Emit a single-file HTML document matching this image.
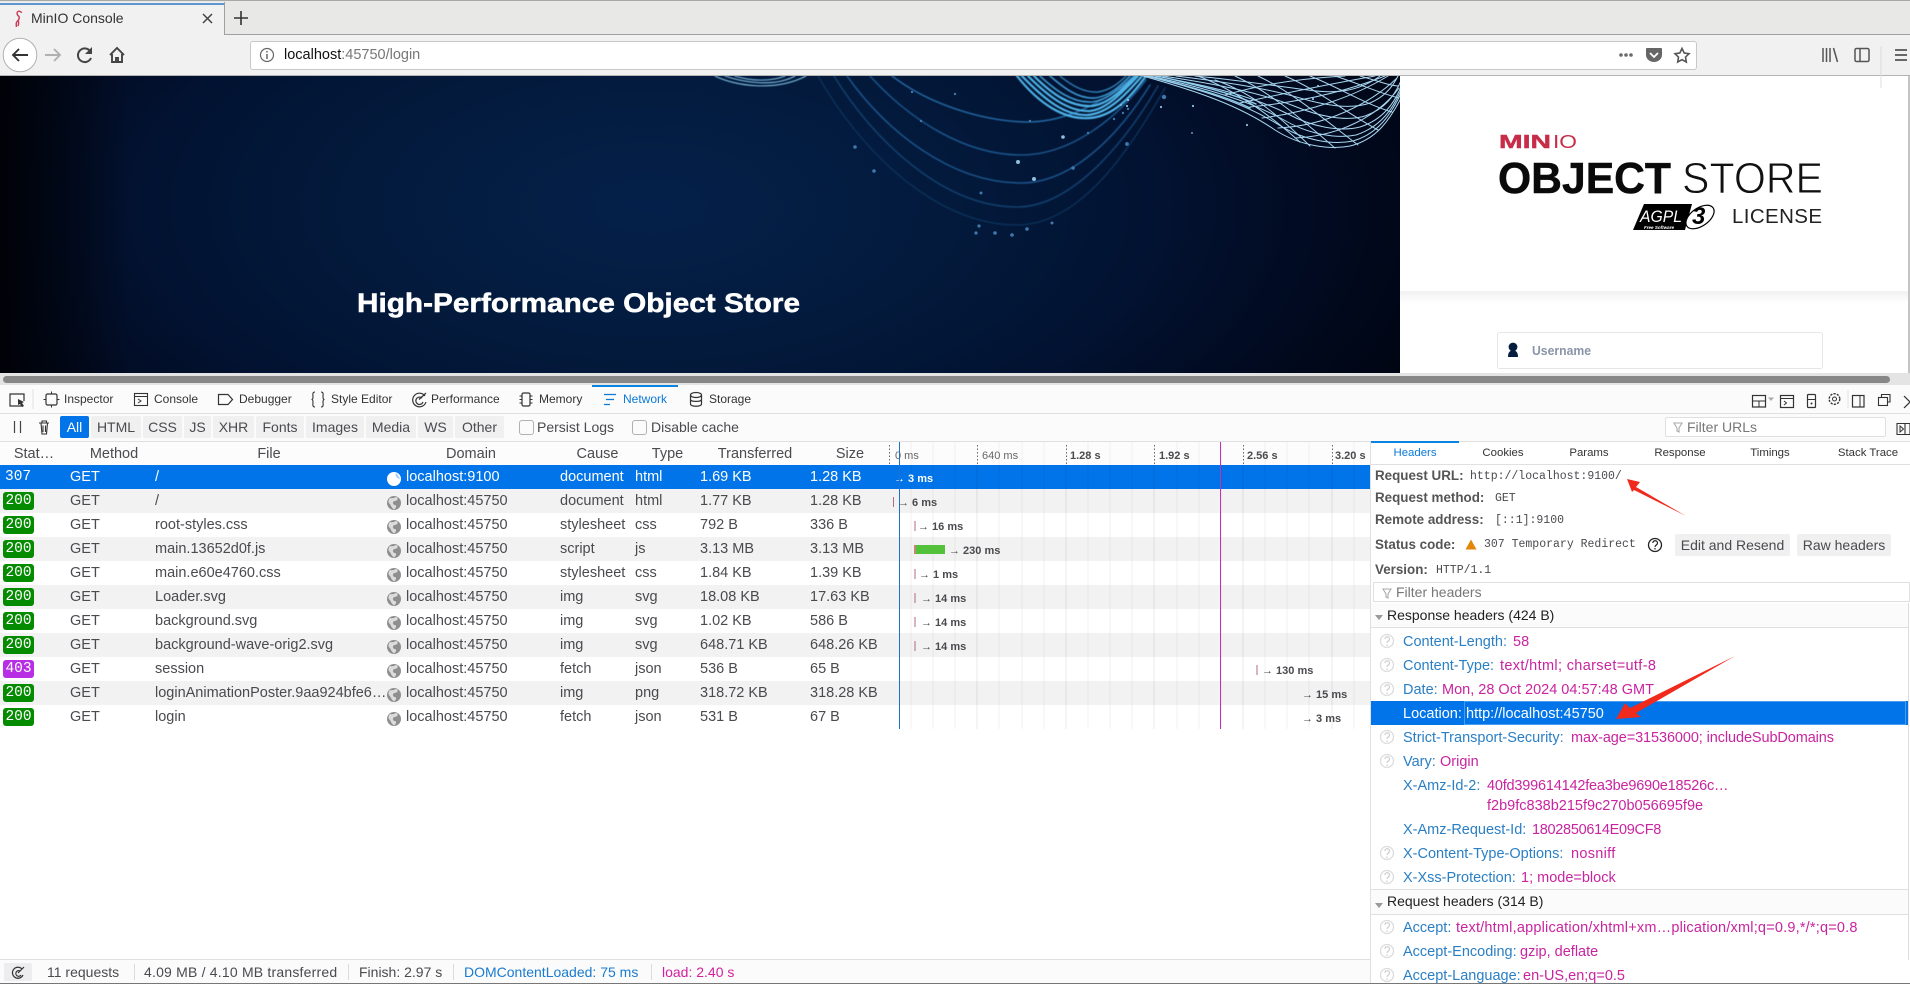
<!DOCTYPE html>
<html lang="en"><head><meta charset="utf-8"><title>MinIO Console</title>
<style>
html,body{margin:0;padding:0;width:1910px;height:984px;overflow:hidden;background:#fff}
body{position:relative;font-family:"Liberation Sans",sans-serif;color:#4a4a4f;font-size:14.5px}
.a,.t{position:absolute}
.t{white-space:nowrap;line-height:20px;height:20px}
.m{font-family:"Liberation Mono",monospace;font-size:11.5px;color:#4a4a4f;margin-top:1px}
.b{font-weight:bold;font-size:13.4px;color:#555}
.tb{font-size:12px;color:#333}
.fb{position:absolute;top:416px;height:22px;line-height:22px;background:#f0f0f1;border-radius:2px;text-align:center;font-size:14px;color:#4a4a4f}
.h{position:absolute;top:442px;height:24px;line-height:24px;text-align:center;font-size:14.5px;color:#4a4a4f}
.r{position:absolute;left:0;width:1370px;height:24px;font-size:14.5px;color:#4a4a4f}
.r span{position:absolute;top:0;line-height:24px;white-space:nowrap}
.o{background:#f2f2f2}
.c1{left:70px}.c2{left:155px}.c3{left:406px}.c4{left:560px}.c5{left:635px}.c6{left:700px}.c7{left:810px}
.r .s{left:3px;top:3px;width:31px;height:18px;line-height:18px;border-radius:3px;background:#058b00;color:#fff;font-family:"Liberation Mono",monospace;font-size:14.5px;text-align:center}
.tk{position:absolute;font-size:11px;font-weight:bold;color:#4a4a4f;white-space:nowrap;line-height:16px;margin-top:1px}
.st{font-size:11.4px;color:#333;text-align:center;position:absolute;top:441px;height:23px;line-height:25px}
.n{color:#2a7fc4;font-size:14.5px;position:absolute;left:1403px;white-space:nowrap;line-height:20px;margin-top:1px}
.v{color:#c9249f;font-size:14.5px;position:absolute;white-space:nowrap;line-height:20px;margin-top:1px}
.sb{position:absolute;top:962px;line-height:20px;font-size:14px;white-space:nowrap;color:#4a4a4f}
.sp{position:absolute;top:964px;width:1px;height:16px;background:#dcdcdc}
</style></head><body>

<!-- browser chrome -->
<div class="a" style="left:0;top:0;width:1910px;height:34px;background:#e8e8e7;border-top:1px solid #a8a8a8;box-sizing:border-box"></div>
<div class="a" style="left:0;top:34px;width:1910px;height:1px;background:#a0a0a0"></div>
<div class="a" style="left:0;top:35px;width:1910px;height:41px;background:#f1f1f1"></div>
<div class="a" style="left:0;top:2px;width:224px;height:33px;background:#f1f1f1;border-right:1px solid #a0a0a0;box-sizing:content-box"></div>
<div class="a" style="left:0;top:3px;width:224px;height:2px;background:#5f96cd"></div>
<div class="t" style="left:31px;top:8px;font-size:14px;color:#333">MinIO Console</div>
<div class="a" style="left:250px;top:41px;width:1447px;height:29px;box-sizing:border-box;background:#fff;border:1px solid #c8c8c8;border-radius:3px"></div>
<div class="t" style="left:284px;top:45px;font-size:14.5px;color:#111">localhost<span style="color:#777">:45750/login</span></div>

<!-- page -->
<div class="a" style="left:0;top:75px;width:1910px;height:1px;background:#b4b4b4"></div>
<div class="a" style="left:0;top:76px;width:1400px;height:297px;background:linear-gradient(90deg,#000208,rgba(0,2,8,0) 130px),radial-gradient(ellipse 850px 420px at 650px 130px,#04204a 0%,#031a3c 35%,#021231 60%,#010a20 80%,#000410 100%)"></div>
<svg class="a" style="left:0;top:76px" width="1400" height="297" viewBox="0 76 1400 297">
<g fill="none" stroke-linecap="round" style="filter:blur(.45px)">
<g stroke="#1a5288" stroke-width="1.6">
<path d="M892 76C930 105 985 122 1030 122C1070 121 1105 100 1135 78" stroke="#23639c"/>
<path d="M870 76C910 120 965 155 1021 155C1070 155 1115 120 1146 80" />
<path d="M847 76C885 130 950 183 1021 183C1075 183 1122 130 1150 85" />
<path d="M834 76C870 135 940 207 1017 207C1075 207 1130 135 1158 86" stroke="#123f6d"/>
<path d="M818 76C860 150 935 225 1017 225C1080 225 1130 150 1165 88" stroke="#0c2f56" />
</g>
<g stroke="#4fb4e8" stroke-width="2.2">
<path d="M1017 76C1040 105 1065 120 1090 118C1115 116 1132 95 1146 76"/>
<path d="M1022 76C1045 100 1065 116 1088 115C1110 113 1128 92 1142 76"/>
<path d="M1028 76C1048 96 1068 112 1090 111C1108 109 1124 90 1138 76"/>
<path d="M1034 76C1052 94 1070 107 1092 106C1108 104 1122 90 1136 76"/>
<path d="M1040 76C1055 90 1072 103 1092 102C1108 100 1120 88 1134 76" stroke="#3c96cc" stroke-width="1.6"/>
<path d="M1050 76C1064 88 1078 99 1095 98C1110 96 1120 86 1130 76" stroke="#3c96cc" stroke-width="1.6"/>
<path d="M1060 76C1072 86 1085 93 1098 92C1110 90 1118 84 1126 76" stroke="#2f80b8" stroke-width="1.4"/>
</g>
<g stroke="#7fc0e4" stroke-width="1.1">
<path d="M715 76C735 86 775 92 806 76"/><path d="M725 76C745 83 775 87 795 76"/><path d="M735 76C750 81 770 82 785 76"/>
</g></g>
<g fill="none" stroke="#a8d6f0" stroke-width="1" stroke-linecap="round" style="filter:blur(.2px)">
<path d="M1143 76C1200 92 1240 106 1275 130C1300 146 1330 150 1350 146C1375 140 1390 122 1405 90"/>
<path d="M1146 76C1203 90 1244 103 1279 125C1305 141 1333 145 1353 141C1377 134 1392 116 1405 84"/>
<path d="M1150 76C1205 88 1248 100 1284 120C1308 134 1336 139 1356 135C1380 127 1394 110 1405 80"/>
<path d="M1155 76C1210 86 1252 96 1288 114C1312 127 1340 132 1360 127C1382 120 1396 104 1405 76"/>
<path d="M1163 76C1215 84 1258 92 1294 106C1318 116 1345 122 1365 116C1385 109 1395 96 1403 76"/>
<path d="M1176 76C1225 82 1265 88 1300 98C1324 105 1350 110 1370 103C1384 97 1392 88 1398 76"/>
<path d="M1195 76C1238 80 1275 86 1308 90C1335 94 1358 92 1380 76"/>
<path d="M1148 76C1195 88 1225 96 1250 108" stroke="#8fcdee" stroke-width="1.4"/>
<path d="M1158 76C1200 86 1228 92 1256 104" stroke="#8fcdee" stroke-width="1.4"/>
<path d="M1215 80C1250 92 1275 112 1310 146"/><path d="M1198 76C1235 90 1270 115 1300 142"/>
<path d="M1235 76C1270 92 1300 118 1335 148"/><path d="M1258 76C1292 92 1325 120 1358 145"/>
<path d="M1285 76C1318 90 1345 112 1378 130"/><path d="M1310 76C1340 88 1365 104 1392 112"/>
<path d="M1335 76C1360 84 1382 94 1399 98"/><path d="M1360 76C1375 80 1390 86 1399 86"/>
<path d="M1225 95C1270 82 1310 78 1345 76"/><path d="M1240 103C1290 92 1330 84 1375 76"/>
<path d="M1262 118C1310 112 1355 96 1388 76"/><path d="M1278 128C1325 126 1370 104 1397 78"/>
<path d="M1295 138C1340 136 1378 116 1399 88"/><path d="M1250 107C1300 102 1345 92 1385 76"/>
</g>
<g fill="#3f78ad">
<circle cx="855" cy="147" r="1.8"/><circle cx="874" cy="171" r="1.8"/><circle cx="912" cy="92" r="1.2"/><circle cx="921" cy="121" r="1.2"/><circle cx="955" cy="94" r="1.2"/><circle cx="981" cy="193" r="1.5"/><circle cx="979" cy="226" r="1.6"/><circle cx="976" cy="233" r="1.6"/><circle cx="995" cy="233" r="1.8"/><circle cx="1012" cy="235" r="1.8"/><circle cx="1027" cy="229" r="1.8"/><circle cx="1052" cy="223" r="1.5"/>
<circle cx="1073" cy="168" r="1.8"/><circle cx="1030" cy="121" r="1.2"/><circle cx="1088" cy="133" r="1.2"/><circle cx="1127" cy="144" r="1.9"/><circle cx="1114" cy="119" r="1.2"/><circle cx="1123" cy="113" r="1.2"/><circle cx="1128" cy="109" r="1.2"/><circle cx="1164" cy="97" r="2.2"/></g>
<g fill="#8fbfe0"><circle cx="1018" cy="162" r="2"/><circle cx="1034" cy="179" r="2"/><circle cx="1063" cy="137" r="1.8"/><circle cx="1127" cy="106" r="1.1"/><circle cx="1121" cy="105" r=".9"/><circle cx="1128" cy="100" r="1.1"/><circle cx="1161" cy="107" r="1.1"/><circle cx="1193" cy="106" r="1.1"/><circle cx="1192" cy="133" r=".9"/><circle cx="1247" cy="125" r="1.1"/><circle cx="1312" cy="90" r="1.1"/><circle cx="1318" cy="86" r="1.1"/><circle cx="1313" cy="99" r="1.1"/></g>
<text x="357" y="312" font-family="Liberation Sans,sans-serif" font-weight="bold" font-size="27" fill="#fff" stroke="#fff" stroke-width=".5" textLength="443" lengthAdjust="spacingAndGlyphs">High-Performance Object Store</text>
</svg>

<div class="a" style="left:1400px;top:76px;width:508px;height:297px;background:#fff"></div>
<div class="a" style="left:1908px;top:76px;width:2px;height:297px;background:#c4c4c4"></div>
<div class="a" style="left:1400px;top:291px;width:508px;height:12px;background:linear-gradient(#f0f0f0,#fff)"></div>
<svg class="a" style="left:1400px;top:76px" width="508" height="297" viewBox="1400 76 508 297" font-family="Liberation Sans,sans-serif">
<text x="1499" y="148" font-size="18" font-weight="bold" fill="#c72c48" textLength="52" lengthAdjust="spacingAndGlyphs" stroke="#c72c48" stroke-width=".4">MIN</text>
<text x="1553" y="148" font-size="18" fill="#c72c48" textLength="24" lengthAdjust="spacingAndGlyphs">IO</text>
<text x="1498" y="193" font-size="44" font-weight="bold" fill="#0a0a0a" stroke="#0a0a0a" stroke-width=".5" textLength="173" lengthAdjust="spacingAndGlyphs">OBJECT</text>
<text x="1682" y="193" font-size="44" fill="#111" stroke="#fff" stroke-width=".9" textLength="141" lengthAdjust="spacingAndGlyphs">STORE</text>
<text x="1732" y="223" font-size="20.5" fill="#222" textLength="90" lengthAdjust="spacing">LICENSE</text>
<polygon points="1633,230 1644,204 1692,204 1687,222 1685,230" fill="#000"/>
<text x="1640" y="222" font-size="17" font-style="italic" fill="#fff" textLength="42" lengthAdjust="spacingAndGlyphs">AGPL</text>
<text x="1644" y="229" font-size="4.5" font-style="italic" font-weight="bold" fill="#fff" textLength="30" lengthAdjust="spacingAndGlyphs">Free Software</text>
<path d="M1684 216C1692 222 1696 214 1700 208" fill="none" stroke="#000" stroke-width="1.4"/>
<ellipse cx="1700" cy="217" rx="16" ry="9" transform="rotate(-35 1700 217)" fill="#fff" stroke="#000" stroke-width="1.2"/>
<text x="1692" y="224" font-size="24" font-style="italic" font-weight="bold" fill="#000">3</text>
<rect x="1497.5" y="332.5" width="325" height="36" rx="2" fill="#fff" stroke="#e4e6ea"/>
<circle cx="1513" cy="347" r="4.4" fill="#071d3f"/><path d="M1508 357c0-5 2-6.500 5-6.500s5 1.500 5 6.500z" fill="#071d3f"/>
<text x="1532" y="355" font-size="13" font-weight="bold" fill="#8a94a8" textLength="59" lengthAdjust="spacingAndGlyphs">Username</text>
</svg>
<div class="a" style="left:0;top:373px;width:1910px;height:12px;background:#e4e4e4"></div>
<div class="a" style="left:3px;top:376px;width:1887px;height:7px;background:#878787;border-radius:4px"></div>

<!-- devtools -->
<div class="a" style="left:0;top:385px;width:1910px;height:28px;background:#fbfbfb"></div>
<div class="a" style="left:0;top:413px;width:1910px;height:1px;background:#e0e0e2"></div>
<div class="a" style="left:0;top:414px;width:1910px;height:27px;background:#fbfbfb"></div>
<div class="a" style="left:0;top:441px;width:1910px;height:1px;background:#e0e0e2"></div>
<div class="a" style="left:592px;top:385px;width:86px;height:2px;background:#0a84e0"></div>
<div class="t tb" style="left:64px;top:389px">Inspector</div>
<div class="t tb" style="left:154px;top:389px">Console</div>
<div class="t tb" style="left:239px;top:389px">Debugger</div>
<div class="t tb" style="left:331px;top:389px">Style Editor</div>
<div class="t tb" style="left:431px;top:389px">Performance</div>
<div class="t tb" style="left:539px;top:389px">Memory</div>
<div class="t tb" style="left:623px;top:389px;color:#0a7ad8">Network</div>
<div class="t tb" style="left:709px;top:389px">Storage</div>

<div class="fb" style="left:60px;width:29px;background:#0074e8;color:#fff">All</div>
<div class="fb" style="left:91px;width:50px">HTML</div>
<div class="fb" style="left:143px;width:39px">CSS</div>
<div class="fb" style="left:184px;width:27px">JS</div>
<div class="fb" style="left:213px;width:41px">XHR</div>
<div class="fb" style="left:256px;width:48px">Fonts</div>
<div class="fb" style="left:306px;width:58px">Images</div>
<div class="fb" style="left:366px;width:50px">Media</div>
<div class="fb" style="left:418px;width:35px">WS</div>
<div class="fb" style="left:455px;width:49px">Other</div>
<div class="a" style="left:519px;top:420px;width:15px;height:15px;box-sizing:border-box;border:1px solid #b1b1b1;border-radius:3px;background:#fbfbfb"></div>
<div class="t" style="left:537px;top:417px;font-size:14px">Persist Logs</div>
<div class="a" style="left:632px;top:420px;width:15px;height:15px;box-sizing:border-box;border:1px solid #b1b1b1;border-radius:3px;background:#fbfbfb"></div>
<div class="t" style="left:651px;top:417px;font-size:14px">Disable cache</div>
<div class="a" style="left:1665px;top:417px;width:221px;height:20px;box-sizing:border-box;background:#fff;border:1px solid #e0e0e2;border-radius:2px"></div>
<div class="t" style="left:1687px;top:417px;font-size:14px;color:#777">Filter URLs</div>

<!-- table header -->
<div class="a" style="left:0;top:442px;width:1370px;height:23px;background:#fcfcfc"></div>
<div class="h" style="left:0;width:68px">Stat…</div>
<div class="h" style="left:71px;width:86px">Method</div>
<div class="h" style="left:156px;width:226px">File</div>
<div class="h" style="left:382px;width:178px">Domain</div>
<div class="h" style="left:560px;width:75px">Cause</div>
<div class="h" style="left:635px;width:65px">Type</div>
<div class="h" style="left:700px;width:110px">Transferred</div>
<div class="h" style="left:810px;width:80px">Size</div>
<div class="tk" style="left:895px;top:447px;font-weight:normal;color:#666">0 ms</div>
<div class="tk" style="left:982px;top:447px;font-weight:normal;color:#666">640 ms</div>
<div class="tk" style="left:1070px;top:447px">1.28 s</div>
<div class="tk" style="left:1159px;top:447px">1.92 s</div>
<div class="tk" style="left:1247px;top:447px">2.56 s</div>
<div class="tk" style="left:1335px;top:447px">3.20 s</div>

<!-- rows -->
<div class="r" style="top:465px;background:#0074e8;color:#fff"><span style="left:5px;font-family:'Liberation Mono',monospace">307</span><span class="c1">GET</span><span class="c2">/</span><span class="c3">localhost:9100</span><span class="c4">document</span><span class="c5">html</span><span class="c6">1.69 KB</span><span class="c7">1.28 KB</span></div>
<div class="r o" style="top:489px"><span class="s">200</span><span class="c1">GET</span><span class="c2">/</span><span class="c3">localhost:45750</span><span class="c4">document</span><span class="c5">html</span><span class="c6">1.77 KB</span><span class="c7">1.28 KB</span></div>
<div class="r" style="top:513px"><span class="s">200</span><span class="c1">GET</span><span class="c2">root-styles.css</span><span class="c3">localhost:45750</span><span class="c4">stylesheet</span><span class="c5">css</span><span class="c6">792 B</span><span class="c7">336 B</span></div>
<div class="r o" style="top:537px"><span class="s">200</span><span class="c1">GET</span><span class="c2">main.13652d0f.js</span><span class="c3">localhost:45750</span><span class="c4">script</span><span class="c5">js</span><span class="c6">3.13 MB</span><span class="c7">3.13 MB</span></div>
<div class="r" style="top:561px"><span class="s">200</span><span class="c1">GET</span><span class="c2">main.e60e4760.css</span><span class="c3">localhost:45750</span><span class="c4">stylesheet</span><span class="c5">css</span><span class="c6">1.84 KB</span><span class="c7">1.39 KB</span></div>
<div class="r o" style="top:585px"><span class="s">200</span><span class="c1">GET</span><span class="c2">Loader.svg</span><span class="c3">localhost:45750</span><span class="c4">img</span><span class="c5">svg</span><span class="c6">18.08 KB</span><span class="c7">17.63 KB</span></div>
<div class="r" style="top:609px"><span class="s">200</span><span class="c1">GET</span><span class="c2">background.svg</span><span class="c3">localhost:45750</span><span class="c4">img</span><span class="c5">svg</span><span class="c6">1.02 KB</span><span class="c7">586 B</span></div>
<div class="r o" style="top:633px"><span class="s">200</span><span class="c1">GET</span><span class="c2">background-wave-orig2.svg</span><span class="c3">localhost:45750</span><span class="c4">img</span><span class="c5">svg</span><span class="c6">648.71 KB</span><span class="c7">648.26 KB</span></div>
<div class="r" style="top:657px"><span class="s" style="background:#b82ee5">403</span><span class="c1">GET</span><span class="c2">session</span><span class="c3">localhost:45750</span><span class="c4">fetch</span><span class="c5">json</span><span class="c6">536 B</span><span class="c7">65 B</span></div>
<div class="r o" style="top:681px"><span class="s">200</span><span class="c1">GET</span><span class="c2">loginAnimationPoster.9aa924bfe6…</span><span class="c3">localhost:45750</span><span class="c4">img</span><span class="c5">png</span><span class="c6">318.72 KB</span><span class="c7">318.28 KB</span></div>
<div class="r" style="top:705px"><span class="s">200</span><span class="c1">GET</span><span class="c2">login</span><span class="c3">localhost:45750</span><span class="c4">fetch</span><span class="c5">json</span><span class="c6">531 B</span><span class="c7">67 B</span></div>

<div class="tk" style="left:894px;top:470px;color:#fff">→ 3 ms</div>
<div class="tk" style="left:898px;top:494px">→ 6 ms</div>
<div class="tk" style="left:918px;top:518px">→ 16 ms</div>
<div class="tk" style="left:949px;top:542px">→ 230 ms</div>
<div class="tk" style="left:919px;top:566px">→ 1 ms</div>
<div class="tk" style="left:921px;top:590px">→ 14 ms</div>
<div class="tk" style="left:921px;top:614px">→ 14 ms</div>
<div class="tk" style="left:921px;top:638px">→ 14 ms</div>
<div class="tk" style="left:1262px;top:662px">→ 130 ms</div>
<div class="tk" style="left:1302px;top:686px">→ 15 ms</div>
<div class="tk" style="left:1302px;top:710px">→ 3 ms</div>

<!-- sidebar -->
<div class="a" style="left:1370px;top:442px;width:540px;height:542px;background:#fff;border-left:1px solid #e0e0e2;box-sizing:border-box"></div>
<div class="a" style="left:1371px;top:441px;width:88px;height:2px;background:#0a84e0"></div>
<div class="a" style="left:1371px;top:464px;width:539px;height:1px;background:#e0e0e2"></div>
<div class="st" style="left:1371px;width:88px;color:#0a7ad8">Headers</div>
<div class="st" style="left:1459px;width:88px">Cookies</div>
<div class="st" style="left:1547px;width:84px">Params</div>
<div class="st" style="left:1635px;width:90px">Response</div>
<div class="st" style="left:1725px;width:90px">Timings</div>
<div class="st" style="left:1823px;width:90px">Stack Trace</div>

<div class="t b" style="left:1375px;top:466px">Request URL:</div><div class="t m" style="left:1470px;top:466px">http://localhost:9100/</div>
<div class="t b" style="left:1375px;top:488px">Request method:</div><div class="t m" style="left:1495px;top:488px">GET</div>
<div class="t b" style="left:1375px;top:510px">Remote address:</div><div class="t m" style="left:1495px;top:510px">[::1]:9100</div>
<div class="t b" style="left:1375px;top:535px">Status code:</div><div class="t m" style="left:1484px;top:534px">307 Temporary Redirect</div>
<div class="a" style="left:1675px;top:534px;width:115px;height:22px;line-height:22px;background:#f0f0f1;border-radius:2px;text-align:center;font-size:14px">Edit and Resend</div>
<div class="a" style="left:1797px;top:534px;width:94px;height:22px;line-height:22px;background:#f0f0f1;border-radius:2px;text-align:center;font-size:14px">Raw headers</div>
<div class="t b" style="left:1375px;top:560px">Version:</div><div class="t m" style="left:1436px;top:560px">HTTP/1.1</div>
<div class="a" style="left:1373px;top:582px;width:537px;height:20px;box-sizing:border-box;border:1px solid #e0e0e2;background:#fff"></div>
<div class="t" style="left:1396px;top:582px;font-size:14px;color:#777">Filter headers</div>

<div class="a" style="left:1371px;top:603px;width:537px;height:25px;background:#fbfbfb;border-bottom:1px solid #e0e0e2;box-sizing:border-box"></div>
<div class="t" style="left:1387px;top:605px;font-size:14px;color:#222">Response headers (424 B)</div>
<div class="a" style="left:1371px;top:701px;width:537px;height:24px;background:#0074e8"></div>
<div class="a" style="left:1464px;top:701px;width:442px;height:24px;box-sizing:border-box;border:1px solid #4a9cef"></div>
<div class="n" style="top:631px">Content-Length:</div><div class="v" style="left:1513px;top:631px">58</div>
<div class="n" style="top:655px">Content-Type:</div><div class="v" style="left:1500px;top:655px;letter-spacing:.35px">text/html; charset=utf-8</div>
<div class="n" style="top:679px">Date:</div><div class="v" style="left:1442px;top:679px">Mon, 28 Oct 2024 04:57:48 GMT</div>
<div class="n" style="top:703px;color:#fff">Location:</div><div class="v" style="left:1466px;top:703px;color:#fff">http://localhost:45750</div>
<div class="n" style="top:727px">Strict-Transport-Security:</div><div class="v" style="left:1571px;top:727px;letter-spacing:-.1px">max-age=31536000; includeSubDomains</div>
<div class="n" style="top:751px">Vary:</div><div class="v" style="left:1440px;top:751px">Origin</div>
<div class="n" style="top:775px">X-Amz-Id-2:</div><div class="v" style="left:1487px;top:775px;letter-spacing:-.2px">40fd399614142fea3be9690e18526c…</div><div class="v" style="left:1487px;top:795px">f2b9fc838b215f9c270b056695f9e</div>
<div class="n" style="top:819px">X-Amz-Request-Id:</div><div class="v" style="left:1532px;top:819px;letter-spacing:-.3px">1802850614E09CF8</div>
<div class="n" style="top:843px">X-Content-Type-Options:</div><div class="v" style="left:1571px;top:843px;letter-spacing:.3px">nosniff</div>
<div class="n" style="top:867px">X-Xss-Protection:</div><div class="v" style="left:1521px;top:867px">1; mode=block</div>
<div class="a" style="left:1371px;top:889px;width:537px;height:26px;background:#fbfbfb;border-top:1px solid #e0e0e2;border-bottom:1px solid #e0e0e2;box-sizing:border-box"></div>
<div class="t" style="left:1387px;top:891px;font-size:14px;color:#222">Request headers (314 B)</div>
<div class="n" style="top:917px">Accept:</div><div class="v" style="left:1456px;top:917px;letter-spacing:.2px">text/html,application/xhtml+xm…plication/xml;q=0.9,*/*;q=0.8</div>
<div class="n" style="top:941px">Accept-Encoding:</div><div class="v" style="left:1520px;top:941px">gzip, deflate</div>
<div class="n" style="top:965px;height:18px;overflow:hidden">Accept-Language:</div><div class="v" style="left:1523px;top:965px;height:18px;overflow:hidden">en-US,en;q=0.5</div>

<!-- status bar -->
<div class="a" style="left:0;top:959px;width:1370px;height:24px;background:#fbfbfb;border-top:1px solid #e0e0e2;box-sizing:border-box"></div>
<div class="a" style="left:4px;top:963px;width:28px;height:18px;background:#ededf0;border-radius:2px"></div>
<div class="sb" style="left:47px">11 requests</div><div class="sp" style="left:134px"></div>
<div class="sb" style="left:144px;letter-spacing:.2px">4.09 MB / 4.10 MB transferred</div><div class="sp" style="left:348px"></div>
<div class="sb" style="left:359px">Finish: 2.97 s</div><div class="sp" style="left:453px"></div>
<div class="sb" style="left:464px;color:#1a7bd0">DOMContentLoaded: 75 ms</div><div class="sp" style="left:651px"></div>
<div class="sb" style="left:662px;color:#d3209e">load: 2.40 s</div>
<div class="a" style="left:0;top:983px;width:1910px;height:1px;background:#777"></div>

<!-- icons and overlays -->
<svg class="a" style="left:0;top:0;pointer-events:none" width="1910" height="984" viewBox="0 0 1910 984" fill="none">
<defs>
<g id="gl"><circle r="7" fill="#8f8f8f"/><path d="M-4 -5C-1 -4 1 -6 3 -6C5 -3 2 -2 0 -2C-2 0 -1 2 1 2C3 3 2 5 0 6.500C-2 5 -3 3 -4 1C-6 0 -6 -3 -4 -5Z" fill="#dcdcdc"/></g>
<g id="gw"><circle r="7" fill="#fff"/><path d="M2 -6C4 -4 5 -2 6 0C3 -1 1 -3 2 -6Z" fill="#9ec6f2"/></g>
<g id="hp"><circle r="6.500" stroke="#dcdcdc" stroke-width="1.300" fill="#fff"/><path d="M-2 -2C-2 -5 2.500 -5 2.500 -2C2.500 0 0 0 0 2M0 3.500V5" stroke="#cfcfcf" stroke-width="1.300"/></g>
</defs>
<!-- favicon -->
<path d="M19 11C16 12 17 15 18.500 16C20 17.500 19 20 17.500 21C16 22.500 16 24 16.500 27M18 21C19.500 22 18.500 24 18 26M19 11L22 12.500" stroke="#c83a55" stroke-width="1.400"/>
<!-- close, new tab -->
<path d="M203 14L212 23M212 14L203 23" stroke="#444" stroke-width="1.500"/>
<path d="M241 11V25M234 18H248" stroke="#333" stroke-width="1.600"/>
<!-- nav -->
<circle cx="20" cy="55" r="16.800" fill="#fff" stroke="#b0b0b0"/>
<path d="M28 55H13M19 49L13 55L19 61" stroke="#333" stroke-width="1.900"/>
<path d="M45 55H60M54 49L60 55L54 61" stroke="#b0b0b0" stroke-width="1.900"/>
<path d="M91 52.500A6.800 6.800 0 1 0 91 58" stroke="#444" stroke-width="2"/><path d="M92 47V54H85Z" fill="#444"/>
<path d="M110 55L117 48L124 55M112 54V62H122V54M116 62V58H118V62" stroke="#444" stroke-width="1.900"/>
<!-- url -->
<circle cx="267" cy="55" r="6.500" stroke="#666" stroke-width="1.200"/><path d="M267 54V59M267 51V52.500" stroke="#666" stroke-width="1.500"/>
<g fill="#6a6a6a"><circle cx="1621" cy="55" r="1.800"/><circle cx="1626" cy="55" r="1.800"/><circle cx="1631" cy="55" r="1.800"/></g>
<path d="M1647 48H1661C1662 48 1662 49 1662 49V55C1662 59 1658 62 1654 62C1650 62 1646 59 1646 55V49C1646 49 1646 48 1647 48Z" fill="#666"/><path d="M1650 53L1654 57L1658 53" stroke="#fff" stroke-width="1.800"/>
<path d="M1682 48.500L1684.200 53L1689 53.700L1685.500 57.100L1686.300 62L1682 59.700L1677.700 62L1678.500 57.100L1675 53.700L1679.800 53Z" stroke="#555" stroke-width="1.600"/>
<!-- library etc -->
<path d="M1823 48V62M1826.500 48V62M1830 48V62M1833.500 48L1837.500 62" stroke="#555" stroke-width="1.500"/>
<rect x="1855" y="48.500" width="14" height="13" rx="1.500" stroke="#555" stroke-width="1.500"/><path d="M1860 49V61" stroke="#555" stroke-width="1.500"/>
<path d="M1881 46V88" stroke="#dcdcdc"/>
<path d="M1895 50H1907M1895 55H1907M1895 60H1907" stroke="#555" stroke-width="1.800"/>

<!-- toolbox icons -->
<path d="M23 406H10V394H24V401" stroke="#333" stroke-width="1.200"/><path d="M18 399L24 402L22 403L24 406L22 407L20 404L18 405Z" fill="#333"/>
<path d="M33 389V409" stroke="#e0e0e2"/>
<rect x="46" y="394" width="11" height="11" rx="1.500" stroke="#333" stroke-width="1.200"/><path d="M51.500 391.500V394M51.500 405V407.500M43.500 399.500H46M57 399.500H59.500" stroke="#333"/>
<rect x="134.500" y="393.500" width="13" height="12" stroke="#333" stroke-width="1.100"/><path d="M134.500 396.500H147.500M138 399L141 401L138 403" stroke="#333"/>
<path d="M218.500 394.500H228L232.500 399.500L228 404.500H218.500Z" stroke="#333" stroke-width="1.200"/>
<path d="M315 392C312 392 313 395 313 397C313 399 312 399.500 311.500 399.500C312 399.500 313 400 313 402C313 404 312 407 315 407M321 392C324 392 323 395 323 397C323 399 324 399.500 324.500 399.500C324 399.500 323 400 323 402C323 404 324 407 321 407" stroke="#333" stroke-width="1.100"/>
<path d="M425 396A6.800 6.800 0 1 0 426 402M422 398A3.700 3.700 0 1 0 423 402M419 399.500L426 393" stroke="#333" stroke-width="1.200"/>
<rect x="522" y="393" width="8" height="13" rx="1.500" stroke="#333" stroke-width="1.200"/><path d="M519.500 396H522M519.500 399.500H522M519.500 403H522M530 396H532.500M530 399.500H532.500M530 403H532.500" stroke="#333"/>
<path d="M604 394.500H616M606 399.500H614M604 404.500H610" stroke="#0a7ad8" stroke-width="1.300"/>
<ellipse cx="696" cy="395" rx="5.500" ry="2.500" stroke="#333" stroke-width="1.200"/><path d="M690.500 395V404C690.500 407 701.500 407 701.500 404V395M690.500 399.500C690.500 402 701.500 402 701.500 399.500" stroke="#333" stroke-width="1.200"/>
<!-- right toolbox icons -->
<rect x="1752.500" y="395.500" width="13" height="11.500" stroke="#333" stroke-width="1.200"/><path d="M1752.500 401H1765.500M1759 401V407" stroke="#333"/>
<path d="M1768 397.500H1774L1771 401Z" fill="#aaa"/>
<rect x="1780.500" y="395.500" width="13" height="12" stroke="#333" stroke-width="1.200"/><path d="M1780.500 398.500H1793.500M1784 401L1786.500 403L1784 405" stroke="#333"/>
<rect x="1807.500" y="394.500" width="8" height="13" rx="1" stroke="#333" stroke-width="1.200"/><path d="M1807.500 399.500H1815.500" stroke="#333"/><circle cx="1811.500" cy="403.500" r="1" fill="#333"/>
<circle cx="1834.500" cy="399" r="5.300" stroke="#333" stroke-width="1.400" stroke-dasharray="2.200 1.200"/><circle cx="1834.500" cy="399" r="2" stroke="#333"/>
<path d="M1848 390V408" stroke="#e0e0e2"/>
<rect x="1852.500" y="395.500" width="11.500" height="11.500" stroke="#333" stroke-width="1.200"/><path d="M1860 395.500V407" stroke="#333"/>
<rect x="1878.500" y="397.500" width="9" height="8" stroke="#333" stroke-width="1.100"/><path d="M1881.500 397V394.500H1890V402H1888" stroke="#333" stroke-width="1.100"/>
<path d="M1904 396L1910 402M1904 408L1910 402" stroke="#333" stroke-width="1.200"/>
<!-- filter bar -->
<path d="M14.500 421V433M20.500 421V433" stroke="#444" stroke-width="1.200"/>
<path d="M39 423H49M41 423L42 434H46.500L47.500 423M42 423V421H46.500V423M43 425.500V432M45.500 425.500V432" stroke="#333" stroke-width="1.100"/>
<path d="M1674 423H1682L1679 428V432L1677 431V428Z" stroke="#aaa" stroke-width="1.100"/>
<path d="M1897 423.500H1910V434.500H1897ZM1905 423.500V434.500" stroke="#333" stroke-width="1.100"/><path d="M1900 426V432L1903.500 429Z" stroke="#333"/>
<!-- waterfall grid -->
<path d="M911 442V729M933 442V729M955 442V729M999 442V729M1022 442V729M1044 442V729M1088 442V729M1110 442V729M1132 442V729M1177 442V729M1199 442V729M1221 442V729M1265 442V729M1287 442V729M1309 442V729M1354 442V729" stroke="#000" stroke-opacity=".05"/>
<path d="M977 465V729M1066 465V729M1154 465V729M1243 465V729M1332 465V729" stroke="#000" stroke-opacity=".09"/>
<path d="M889.500 445V465M977.500 445V465M1066.500 445V465M1154.500 445V465M1243.500 445V465M1332.500 445V465" stroke="#666" stroke-dasharray="1.500 2"/>
<path d="M899.500 442V729" stroke="#1e70c8"/>
<path d="M1220.500 442V729" stroke="#c42fb8"/>
<path d="M893.500 497V507M915 521V531M915 569V579M915 593V603M915 617V627M915 641V651M1257 665V675" stroke="#b06a8a"/>
<rect x="914" y="545" width="31" height="9" fill="#53c23a"/><rect x="914" y="545" width="2" height="9" fill="#c8867a"/>
<!-- status bar icon -->
<path d="M22 969A5.500 5.500 0 1 0 23 975M20 971A2.800 2.800 0 1 0 21 975M18 973L24 967" stroke="#333" stroke-width="1.200"/>
<!-- globes -->
<use href="#gw" x="394" y="479"/>
<use href="#gl" x="394" y="503"/><use href="#gl" x="394" y="527"/><use href="#gl" x="394" y="551"/><use href="#gl" x="394" y="575"/><use href="#gl" x="394" y="599"/><use href="#gl" x="394" y="623"/><use href="#gl" x="394" y="647"/><use href="#gl" x="394" y="671"/><use href="#gl" x="394" y="695"/><use href="#gl" x="394" y="719"/>
<!-- sidebar icons -->
<path d="M1471 539.500L1476.500 549.500H1465.500Z" fill="#e2860d"/>
<circle cx="1655" cy="545" r="6.500" stroke="#222" stroke-width="1.300"/><path d="M1652.800 543C1652.800 540 1657.500 540 1657.500 543C1657.500 545 1655 545 1655 547M1655 548V549.500" stroke="#222" stroke-width="1.200"/>
<path d="M1383 589H1391L1388 594V598L1386 597V594Z" stroke="#aaa" stroke-width="1.100"/>
<path d="M1375 615H1383L1379 620Z" fill="#999"/>
<path d="M1375 903H1383L1379 908Z" fill="#999"/>
<use href="#hp" x="1387" y="641"/><use href="#hp" x="1387" y="665"/><use href="#hp" x="1387" y="689"/><use href="#hp" x="1387" y="737"/><use href="#hp" x="1387" y="761"/><use href="#hp" x="1387" y="853"/><use href="#hp" x="1387" y="877"/><use href="#hp" x="1387" y="927"/><use href="#hp" x="1387" y="951"/><use href="#hp" x="1387" y="975"/>
<path d="M1908.500 603V960" stroke="#dcdcdc"/>
<!-- annotation arrows -->
<polygon points="1627,479 1640,482 1636,487 1686,516 1634,490 1632,492" fill="#f02a1c"/>
<polygon points="1616,719 1625,703 1630,708 1735,656 1636,713 1641,717" fill="#f02a1c"/>
</svg>
</body></html>
